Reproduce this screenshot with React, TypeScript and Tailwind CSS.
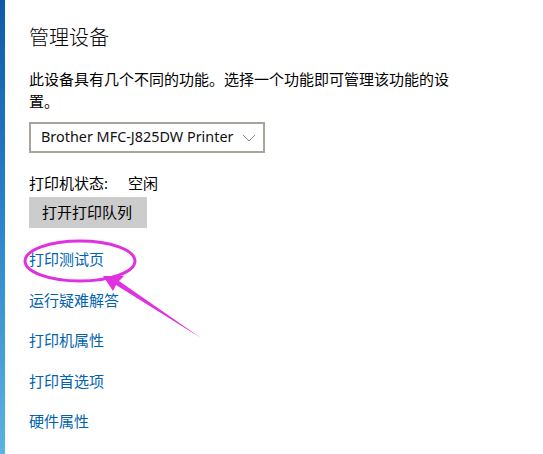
import React from "react";

const links = ["打印测试页", "运行疑难解答", "打印机属性", "打印首选项", "硬件属性"];

export default function App() {
  return (
    <div
      className="relative flex w-[543px] h-[454px] overflow-hidden bg-white text-black"
      style={{ fontFamily: '"Noto Sans", "Noto Sans CJK SC", sans-serif' }}
    >
      {/* left accent strip */}
      <div className="w-[5px] h-full bg-gradient-to-b from-[#0f5aa8] via-[#2a86cc] to-[#5ab4df]" />

      <div className="flex flex-col pl-[24px] pt-[24px]">
        <h1 className="text-[20px] leading-[28px] font-light">管理设备</h1>

        <p className="mt-[16px] w-[428px] text-[15px] leading-[22px]">
          此设备具有几个不同的功能。选择一个功能即可管理该功能的设置。
        </p>

        {/* printer select */}
        <div className="mt-[10px] flex items-center justify-between w-[236px] h-[31px] border-2 border-[#a8a39b] pl-[10px] pr-[7px]">
          <span className="text-[14.4px] leading-none text-[#111]">Brother MFC-J825DW Printer</span>
          <svg width="14" height="8" viewBox="0 0 14 8" fill="none" stroke="#8a8a8a" strokeWidth="1">
            <path d="M1 1l6 6 6-6" />
          </svg>
        </div>

        <div className="mt-[19px] flex text-[15px] leading-[22px]">
          <span className="w-[99px]">打印机状态:</span>
          <span>空闲</span>
        </div>

        <button className="mt-[3px] w-[118px] h-[31px] bg-[#cccccc] text-[15px] text-black text-left pl-[13px]">
          打开打印队列
        </button>

        <ul className="mt-[20px] flex flex-col gap-[18.5px]">
          {links.map((l) => (
            <li key={l} className="text-[15px] leading-[22px] text-[#0063b1]">
              {l}
            </li>
          ))}
        </ul>
      </div>

      {/* annotation overlay */}
      <svg className="absolute left-0 top-0" width="543" height="454" viewBox="0 0 543 454">
        <ellipse cx="80" cy="261" rx="55" ry="20" fill="none" stroke="#e030e0" strokeWidth="3" />
        <path d="M103 276 L124 276 L119 281 L201 338 L116 285 L113 291 Z" fill="#e030e0" />
      </svg>
    </div>
  );
}
